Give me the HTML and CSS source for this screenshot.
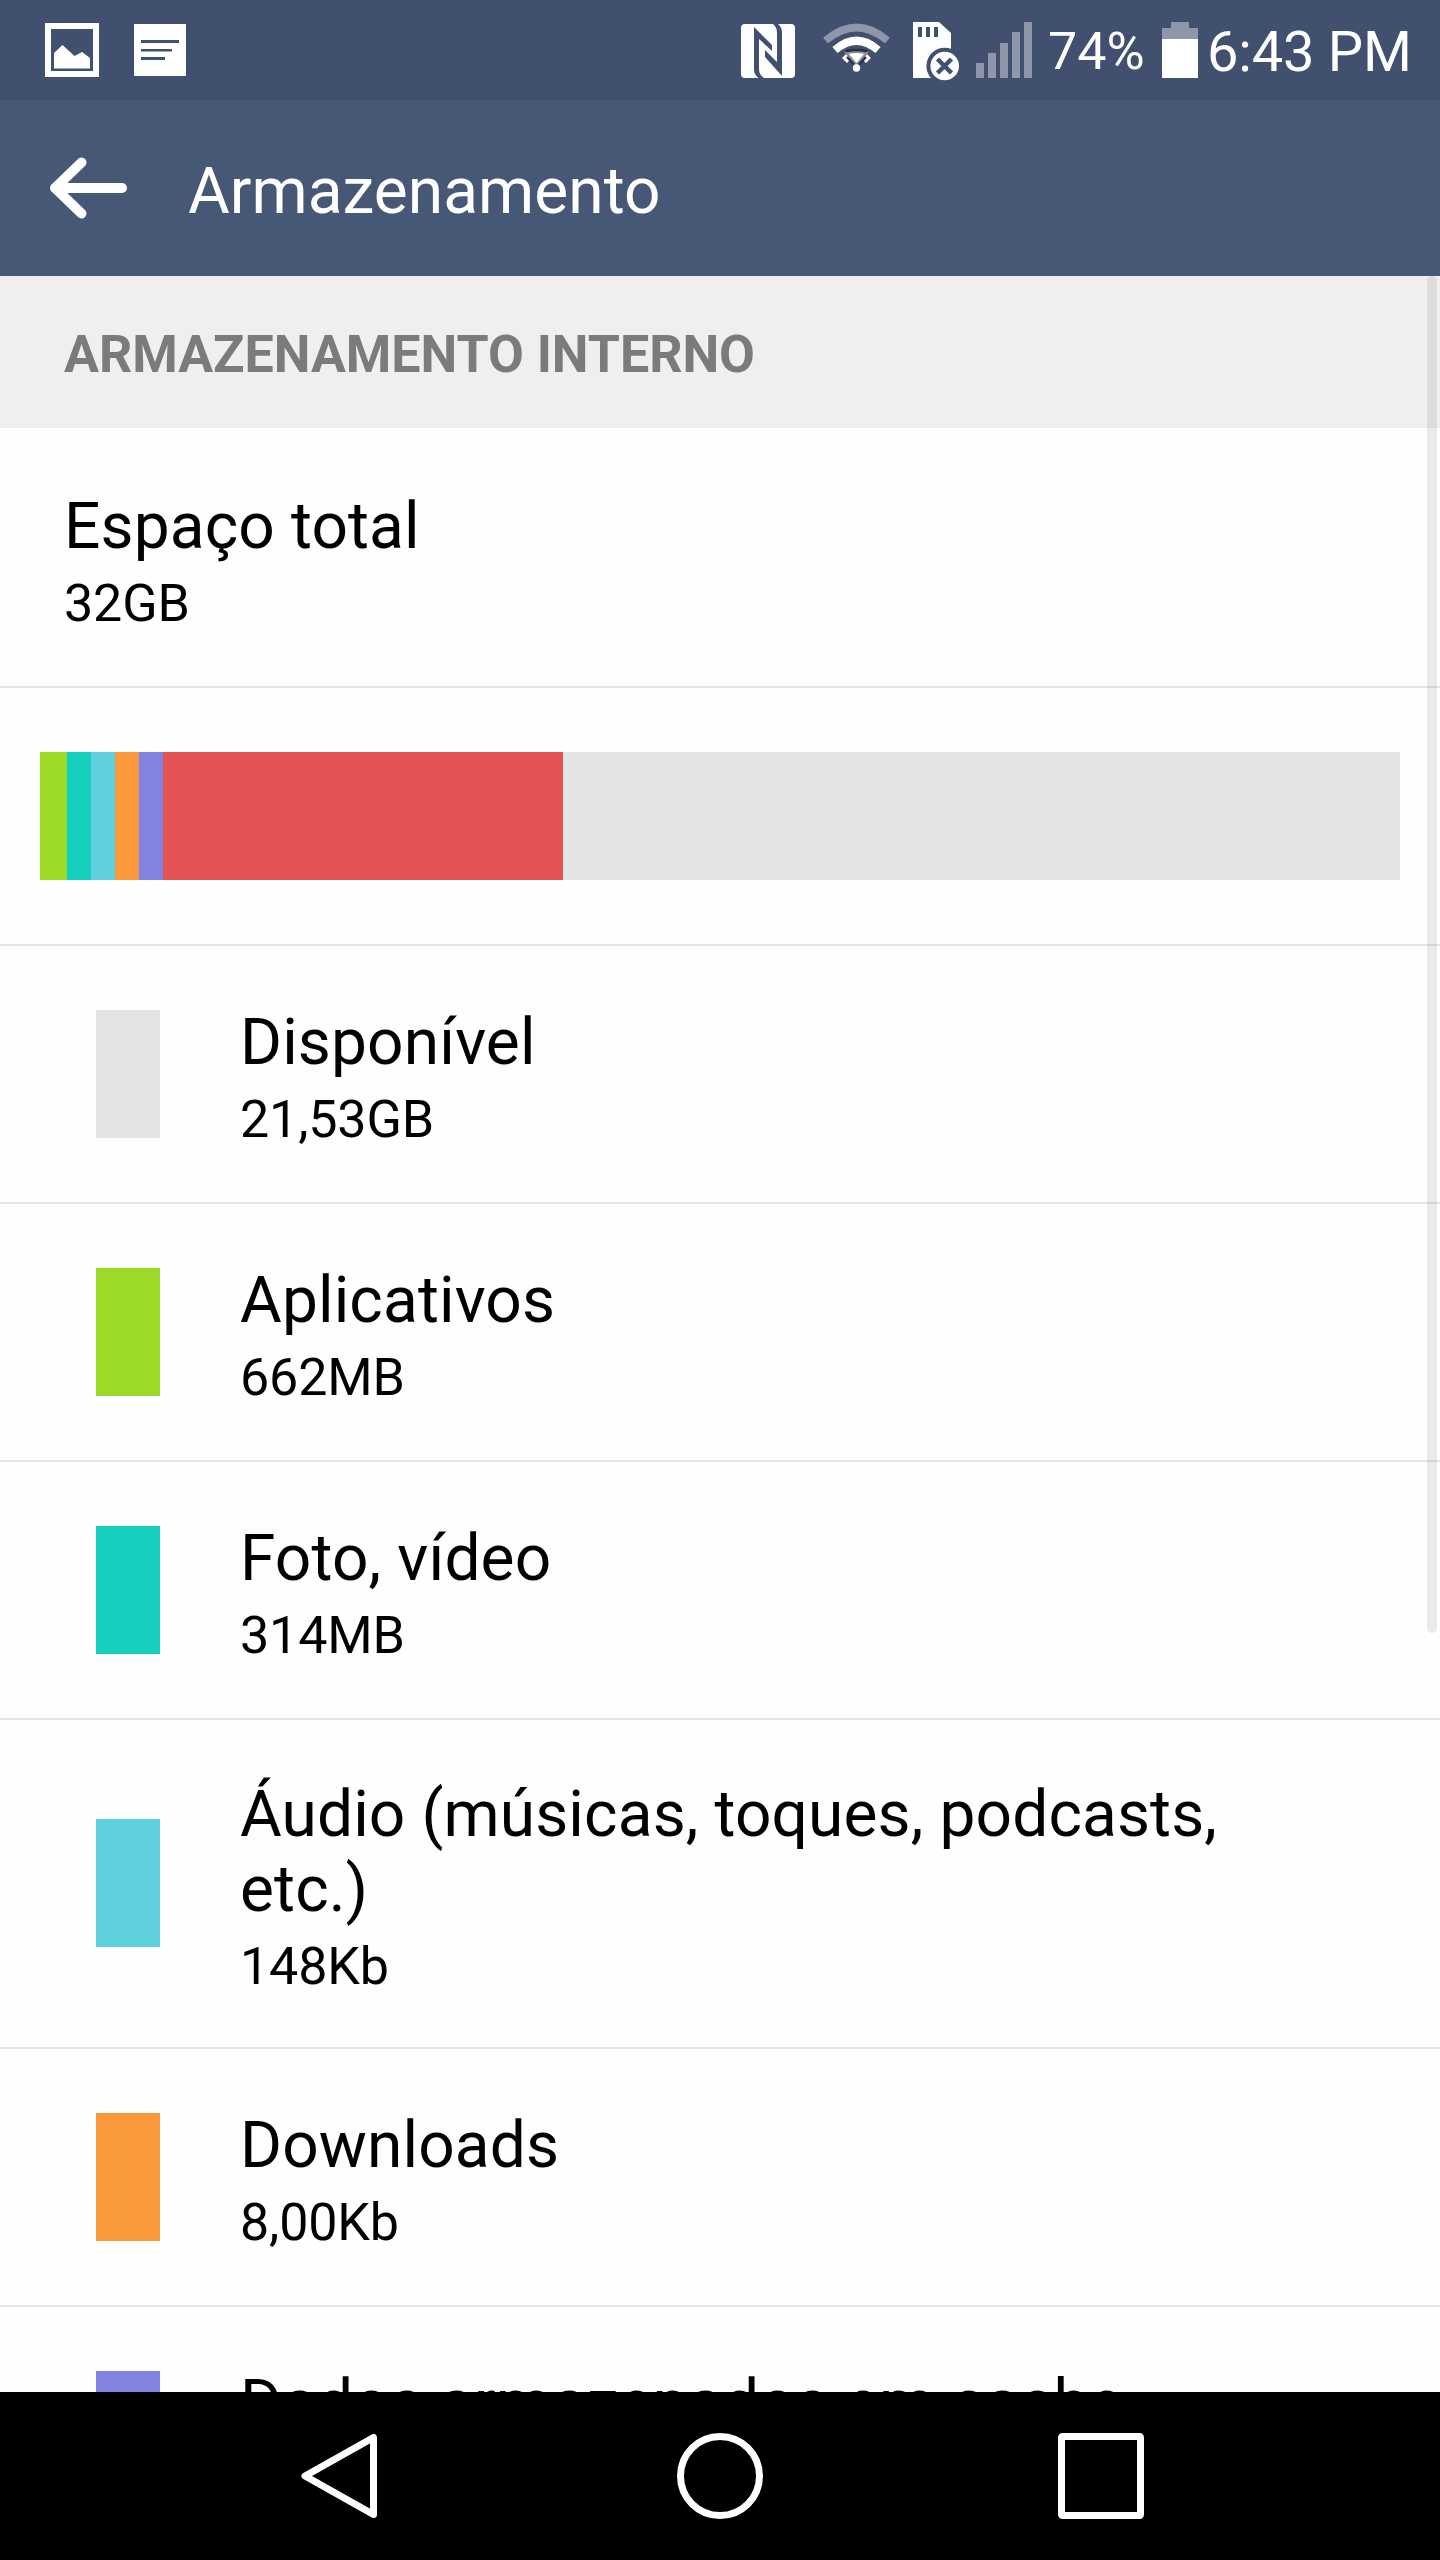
FILE: index.html
```html
<!DOCTYPE html>
<html lang="pt-BR">
<head>
<meta charset="utf-8">
<title>Armazenamento</title>
<link rel="stylesheet" href="styles.css">
</head>
<body>
<div class="screen">
  <header class="status">
    <svg class="ic-image" width="54" height="100" viewBox="45 0 54 100"><path fill="#fff" fill-rule="evenodd" d="M45 23H99V77H45zM51 29V71H93V29z"/><path fill="#fff" d="M54 53L62.500 45L74.500 56L82 52L90 58V68.500H54z"/></svg>
    <svg class="ic-note" width="52" height="100" viewBox="134 0 52 100"><path fill="#fff" d="M134 24H186V76H134z"/><path fill="#40506e" d="M141 40H179V43H141zM141 49H172V51.500H141zM141 57H165V60H141z"/></svg>
    <svg class="ic-nfc" width="54" height="100" viewBox="741 0 54 100"><rect x="741" y="24" width="54" height="54" rx="4" fill="#fff"/><path fill="#40506e" d="M754 27L772 45V51L759 39V69Q759 75 764 78H758.500Q754 75 754 69zM782 76L765 57V50L777 62V33Q777 27 773 24H778Q782 27 782 33z"/></svg>
    <svg class="ic-wifi" width="68" height="100" viewBox="822 0 68 100"><g fill="none"><path stroke="#8e97aa" stroke-width="7.500" d="M825.500 40.500Q856.500 14.500 887.500 40.500"/><path stroke="#fff" stroke-width="8" d="M835 50Q856.500 31.500 878 50"/><path stroke="#fff" stroke-width="7" d="M844.500 60.500L849 56M868.500 60.500L864 56"/></g><path fill="#fff" stroke="#8b8b90" stroke-width="2.500" d="M846.500 53Q856.500 50.500 866.500 53L856.500 65z"/><path stroke="#25304a" stroke-width="2.500" fill="none" d="M846 51Q856.500 49 867 51M847 57L854 64.500M866 57L859 64.500"/><circle cx="856.500" cy="68" r="3.700" fill="#fff"/></svg>
    <svg class="ic-sd" width="48" height="100" viewBox="912 0 48 100"><path fill="#fff" d="M913 22H939L951 33V78H913z"/><path fill="#40506e" d="M918 27H922V37H918zM926 27H930V37H926zM934 27H938V37H934z"/><circle cx="944.700" cy="66" r="18.300" fill="#40506e"/><circle cx="944.700" cy="66" r="14.300" fill="#fff"/><path stroke="#40506e" stroke-width="4.500" d="M937.500 59L951.500 73M951.500 59L937.500 73"/></svg>
    <svg class="ic-signal" width="56" height="100" viewBox="976 0 56 100"><path fill="#8e97aa" d="M976 63H984V78H976zM988 53H996V78H988zM1000 43H1008V78H1000zM1012 32H1020V78H1012zM1024 22H1032V78H1024z"/></svg>
    <span class="percent">74%</span>
    <svg class="ic-battery" width="36" height="100" viewBox="1162 0 36 100"><path fill="#8e97aa" d="M1162 28H1171V22H1189V28H1198V39H1162z"/><path fill="#fff" d="M1162 39H1198V78H1162z"/></svg>
    <span class="clock">6:43 PM</span>
  </header>
  <div class="appbar">
    <svg class="back" width="78" height="64" viewBox="50 156 78 64"><path fill="none" stroke="#fff" stroke-width="10" stroke-linecap="round" stroke-linejoin="round" d="M81.500 162.500L55 188L81.500 213.500M55 188H122"/></svg>
    <h1>Armazenamento</h1>
  </div>
  <main class="content">
    <h2>ARMAZENAMENTO INTERNO</h2>
    <section class="row total"><div class="label"><p class="title">Espaço total</p><p class="value">32GB</p></div></section>
    <section class="usage"><div class="bar">
      <i class="apps" style="width:27px"></i><i class="photo" style="width:24px"></i><i class="audio" style="width:24px"></i><i class="downloads" style="width:24px"></i><i class="cache" style="width:24px"></i><i class="other" style="width:400px"></i>
    </div></section>
    <section class="row"><i class="swatch free"></i><div class="label"><p class="title">Disponível</p><p class="value">21,53GB</p></div></section>
    <section class="row"><i class="swatch apps"></i><div class="label"><p class="title">Aplicativos</p><p class="value">662MB</p></div></section>
    <section class="row"><i class="swatch photo"></i><div class="label"><p class="title">Foto, vídeo</p><p class="value">314MB</p></div></section>
    <section class="row tall"><i class="swatch audio"></i><div class="label"><p class="title">Áudio (músicas, toques, podcasts, etc.)</p><p class="value">148Kb</p></div></section>
    <section class="row"><i class="swatch downloads"></i><div class="label"><p class="title">Downloads</p><p class="value">8,00Kb</p></div></section>
    <section class="row"><i class="swatch cache"></i><div class="label"><p class="title">Dados armazenados em cache</p></div></section>
    <div class="scrollbar"></div>
  </main>
  <nav class="navbar">
    <svg width="86" height="86" viewBox="0 0 86 86"><path fill="none" stroke="#fff" stroke-width="7" stroke-linejoin="round" d="M77.500 4.500V81.500L9 43z"/></svg>
    <svg width="86" height="86" viewBox="0 0 86 86"><circle cx="43" cy="43" r="39.500" fill="none" stroke="#fff" stroke-width="7"/></svg>
    <svg width="86" height="86" viewBox="0 0 86 86"><rect x="3.500" y="3.500" width="79" height="79" rx="1" fill="none" stroke="#fff" stroke-width="7"/></svg>
  </nav>
</div>
</body>
</html>
```
FILE: styles.css
```css
* { box-sizing: border-box; margin: 0; padding: 0; }
body { font-family: Roboto, "Liberation Sans", sans-serif; font-weight: 400; background: #fff; color: #000; }
svg { display: block; flex: none; }
.screen { width: 1440px; height: 2560px; display: flex; flex-direction: column; overflow: hidden; }
.status { height: 100px; flex: none; display: flex; background: #40506e; color: #fff; padding-left: 45px; white-space: nowrap; }
.ic-note { margin-left: 35px; }
.ic-nfc { margin-left: 555px; }
.ic-wifi { margin-left: 27px; }
.ic-sd { margin-left: 22px; }
.ic-signal { margin-left: 16px; }
.percent { width: 114px; margin-left: 16px; font-size: 52px; line-height: 104px; }
.clock { margin-left: 9px; font-size: 56px; line-height: 105px; letter-spacing: -0.2px; }
.appbar { height: 176px; flex: none; display: flex; align-items: center; background: #475877; color: #fff; padding-left: 50px; }
.appbar h1 { margin-left: 60px; padding-top: 7px; font-size: 64px; line-height: 75px; font-weight: 400; letter-spacing: 0.05px; }
.content { flex: 1; min-height: 0; position: relative; overflow: hidden; background: #fefefe; }
.content h2 { height: 152px; padding-left: 64px; background: #efefef; color: #7b7b7b; font-size: 52px; line-height: 158px; font-weight: 700; letter-spacing: -0.03px; }
.row { height: 258px; display: flex; align-items: flex-start; gap: 80px; padding: 59px 160px 0 96px; border-bottom: 2px solid #e4e4e4; }
.total { height: 260px; padding: 61px 64px 0; }
.tall { height: 329px; padding-top: 57px; }
.swatch { width: 64px; height: 128px; flex: none; margin-top: 5px; }
.tall .swatch { margin-top: 42px; }
.title { font-size: 64px; line-height: 75px; letter-spacing: 0.13px; }
.value { font-size: 52px; line-height: 61px; margin-top: 9px; letter-spacing: -0.15px; }
.usage { height: 258px; padding: 64px 40px; border-bottom: 2px solid #e4e4e4; }
.bar { height: 128px; display: flex; background: #e4e4e4; }
.free { background: #e4e4e4; }
.apps { background: #9bdb27; }
.photo { background: #14cfbd; }
.audio { background: #5fd0de; }
.downloads { background: #fb9a3c; }
.cache { background: #8084e0; }
.other { background: #e45454; }
.scrollbar { position: absolute; top: 0; right: 3px; width: 10px; height: 1357px; border-radius: 5px; background: rgba(0, 0, 0, 0.08); }
.navbar { height: 168px; flex: none; display: flex; justify-content: center; align-items: center; gap: 295px; background: #000; }
```
